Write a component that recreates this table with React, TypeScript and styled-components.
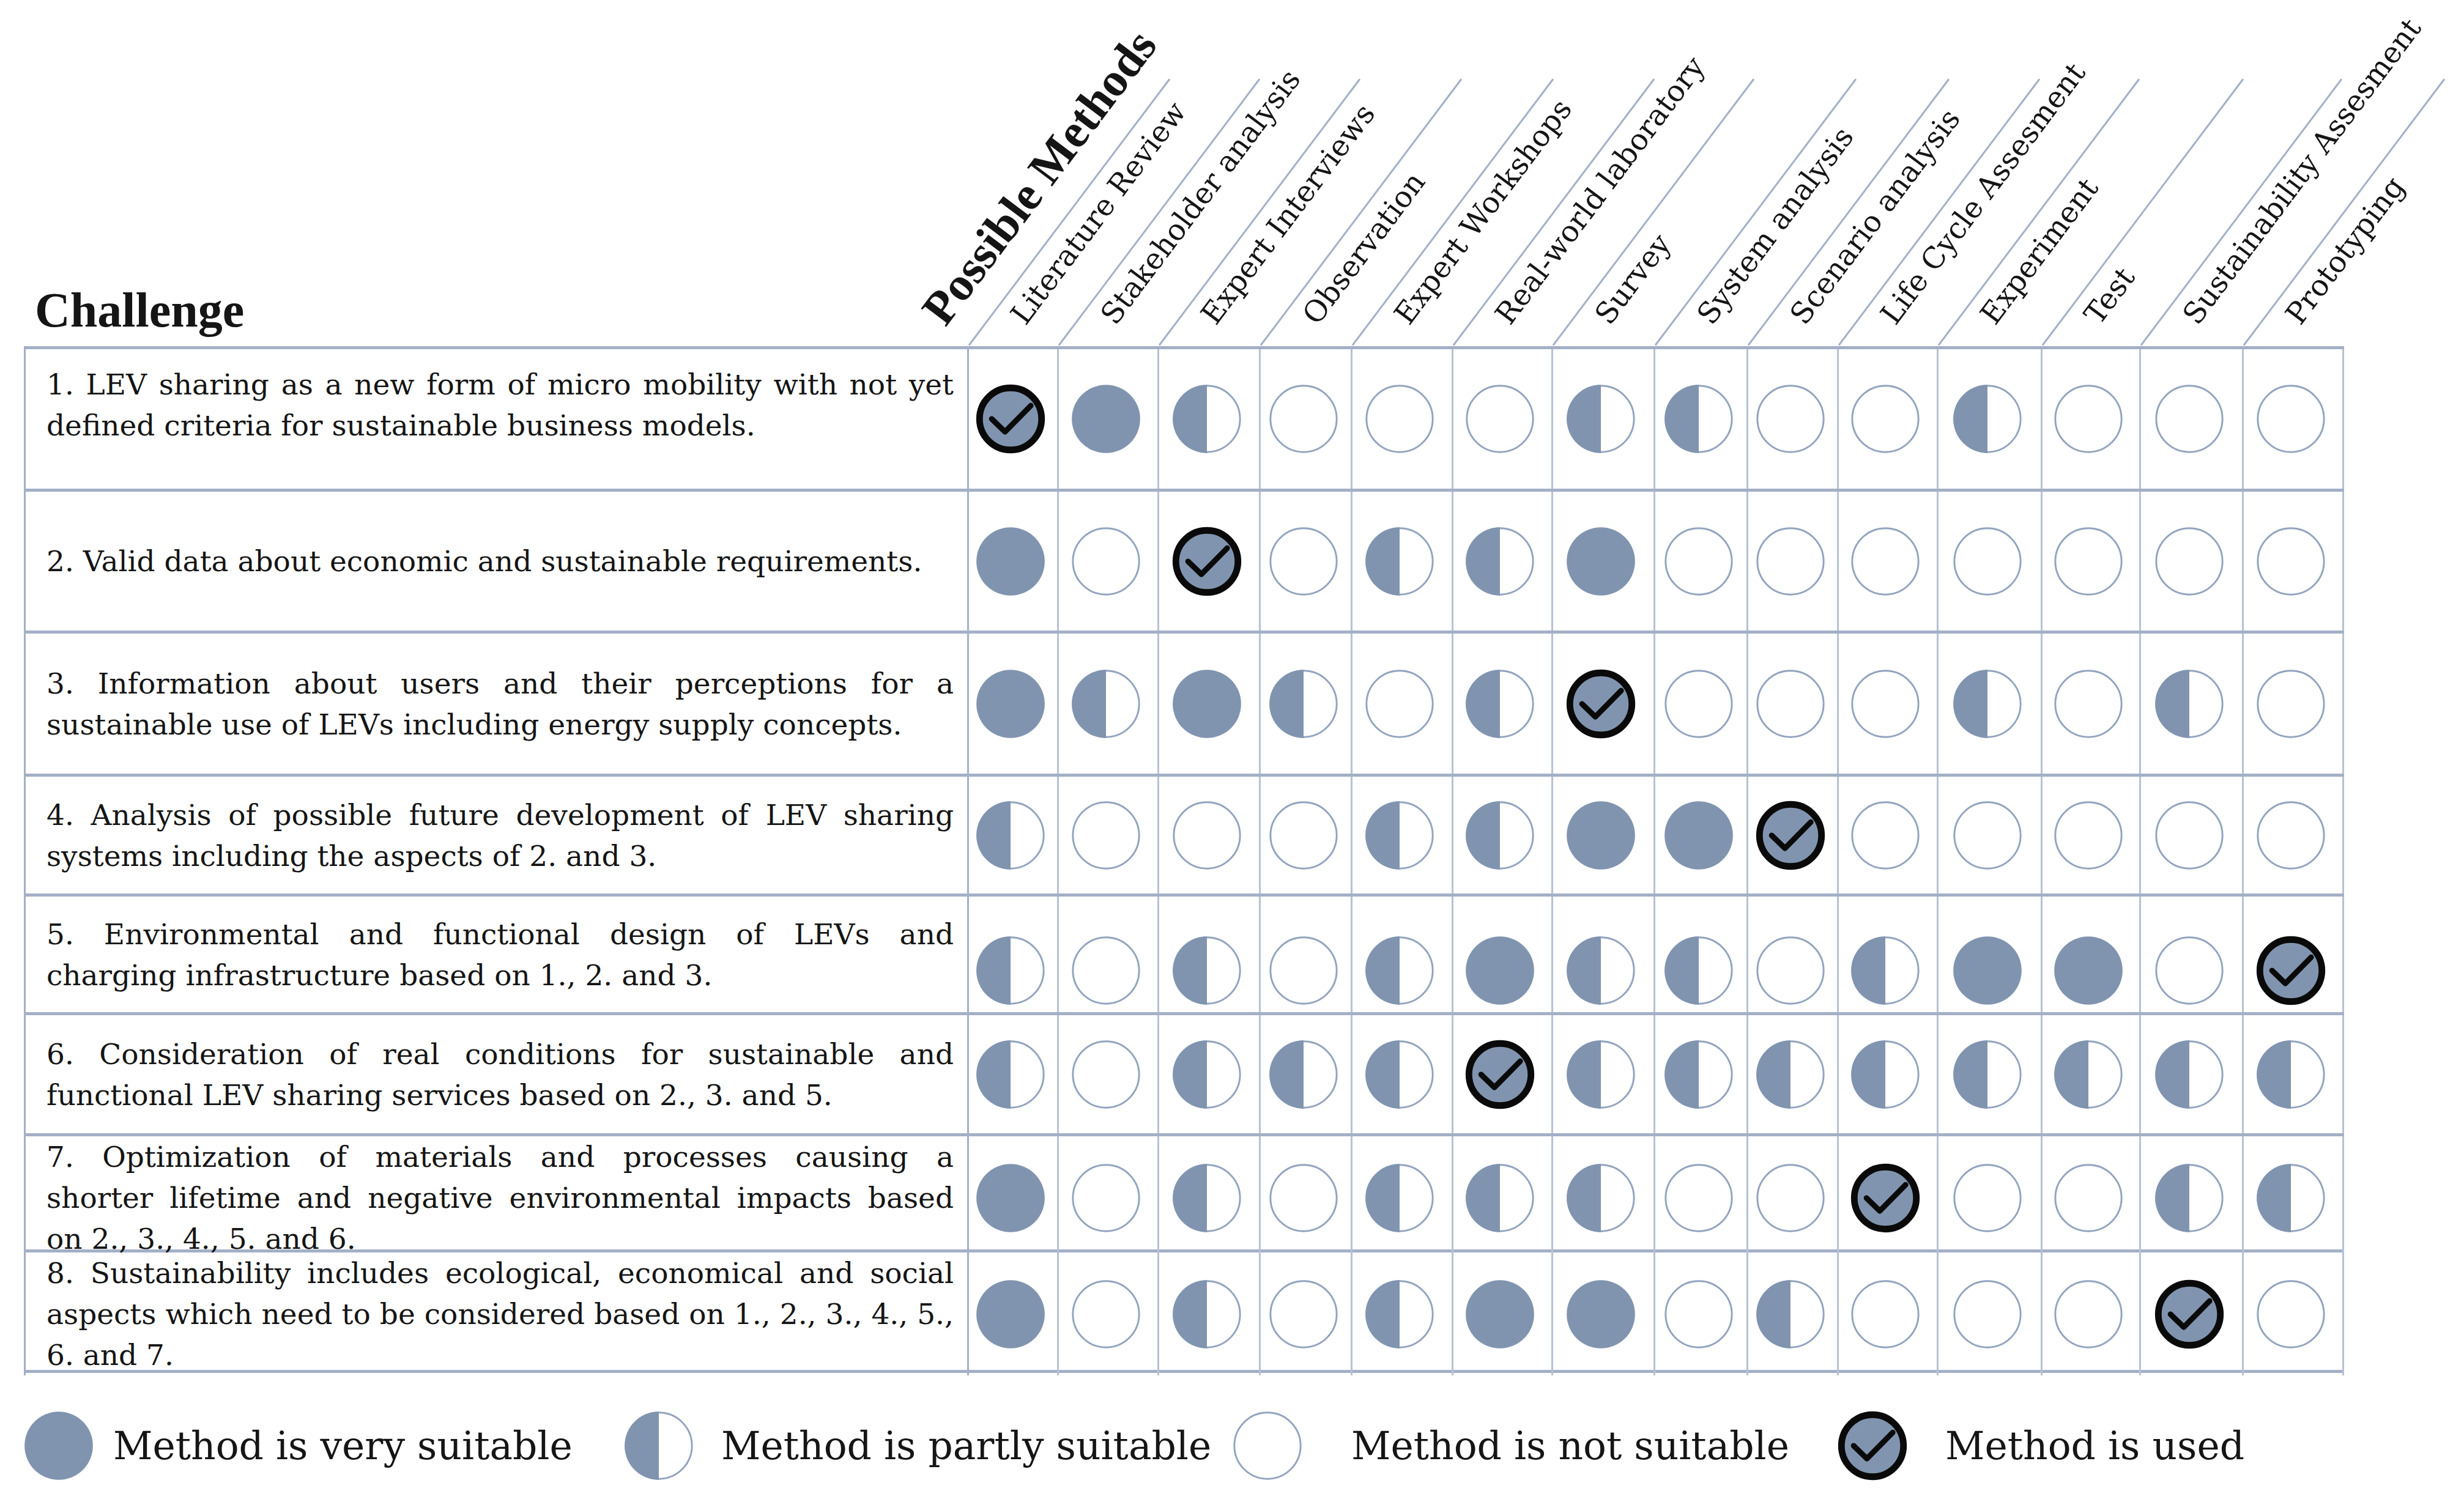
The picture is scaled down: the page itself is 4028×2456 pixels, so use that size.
import React from "react";
import styled, { createGlobalStyle } from "styled-components";

const FILL = "#8194AF";
const OUTLINE = "#93A4BE";
const GRID = "#B7C2D3";
const RULE = "#A3B0C6";
const INK = "#151515";

const GlobalStyle = createGlobalStyle`
  html, body { margin: 0; padding: 0; background: #ffffff; }
  body { width: 4028px; min-height: 2456px; overflow: hidden; }
`;

type Mark = "F" | "H" | "E" | "C";

const LEAD_WIDTH = 1545;
const COL_WIDTHS = [147, 164, 166, 150, 165, 163, 167, 152, 148, 163, 170, 161, 168, 164];
const GRID_TEMPLATE = `${LEAD_WIDTH}px ${COL_WIDTHS.map((w) => `${w}px`).join(" ")}`;

const METHODS = [
  "Literature Review",
  "Stakeholder analysis",
  "Expert Interviews",
  "Observation",
  "Expert Workshops",
  "Real-world laboratory",
  "Survey",
  "System analysis",
  "Scenario analysis",
  "Life Cycle Assesment",
  "Experiment",
  "Test",
  "Sustainability Assesment",
  "Prototyping",
];

type Challenge = {
  lines: string[];
  marks: string;
  height: number;
  textShift?: number;
  markShift?: number;
};

const CHALLENGES: Challenge[] = [
  {
    lines: ["1. LEV sharing as a new form of micro mobility with not yet", "defined criteria for sustainable business models."],
    marks: "CFHEEEHHEEHEEE",
    height: 233,
    textShift: 23,
  },
  {
    lines: ["2. Valid data about economic and sustainable requirements."],
    marks: "FECEHHFEEEEEEE",
    height: 232,
  },
  {
    lines: ["3. Information about users and their perceptions for a", "sustainable use of LEVs including energy supply concepts."],
    marks: "FHFHEHCEEEHEHE",
    height: 234,
  },
  {
    lines: ["4. Analysis of possible future development of LEV sharing", "systems including the aspects of 2. and 3."],
    marks: "HEEEHHFFCEEEEE",
    height: 196,
  },
  {
    lines: ["5. Environmental and functional design of LEVs and", "charging infrastructure based on 1., 2. and 3."],
    marks: "HEHEHFHHEHFFEC",
    height: 194,
    markShift: 26,
  },
  {
    lines: ["6. Consideration of real conditions for sustainable and", "functional LEV sharing services based on 2., 3. and 5."],
    marks: "HEHHHCHHHHHHHH",
    height: 198,
  },
  {
    lines: [
      "7. Optimization of materials and processes causing a",
      "shorter lifetime and negative environmental impacts based",
      "on 2., 3., 4., 5. and 6.",
    ],
    marks: "FEHEHHHEECEEHH",
    height: 190,
  },
  {
    lines: [
      "8. Sustainability includes ecological, economical and social",
      "aspects which need to be considered based on 1., 2., 3., 4., 5.,",
      "6. and 7.",
    ],
    marks: "FEHEHFFEHEEECE",
    height: 197,
  },
];

/* ---------- page ---------- */

const Page = styled.div`
  width: 4028px;
  height: 2456px;
  box-sizing: border-box;
  padding-left: 39px;
  color: ${INK};
  background: #ffffff;
`;

/* ---------- header ---------- */

const HeaderRow = styled.div`
  display: flex;
  height: 566px;
`;

const HeaderLead = styled.div`
  position: relative;
  flex: none;
  width: ${LEAD_WIDTH}px;
  display: flex;
  align-items: flex-end;
`;

const ChallengeTitle = styled.h2`
  margin: 0 0 19px 18px;
  font: bold 80px/1 "Liberation Serif", serif;
  color: ${INK};
`;

const GroupTitle = styled.div`
  position: absolute;
  left: calc(100% - 28px);
  bottom: 22px;
  transform-origin: 0 100%;
  transform: rotate(-53deg);
  font: bold 78px/1 "Liberation Serif", serif;
  white-space: nowrap;
  color: ${INK};
`;

const MethodHead = styled.div<{ $w: number }>`
  position: relative;
  flex: none;
  width: ${(p) => p.$w}px;

  &::before {
    content: "";
    position: absolute;
    left: 0;
    bottom: 0;
    width: 545px;
    height: 3px;
    background: ${RULE};
    transform-origin: 0 50%;
    transform: rotate(-53deg);
  }
`;

const MethodLabel = styled.span`
  position: absolute;
  left: 98px;
  bottom: 28px;
  transform-origin: 0 100%;
  transform: rotate(-53deg);
  font: 48px/1 "DejaVu Serif", serif;
  white-space: nowrap;
  color: ${INK};
`;

/* ---------- table ---------- */

const Table = styled.div`
  border-top: 5px solid ${RULE};
  width: ${LEAD_WIDTH + COL_WIDTHS.reduce((a, b) => a + b, 0)}px;
`;

const Row = styled.div<{ $h: number }>`
  display: grid;
  grid-template-columns: ${GRID_TEMPLATE};
  height: ${(p) => p.$h}px;
  box-sizing: border-box;
  border-bottom: 5px solid ${RULE};
`;

const TextCell = styled.div<{ $shift: number }>`
  box-sizing: border-box;
  display: flex;
  flex-direction: column;
  justify-content: center;
  padding: 0 22px ${(p) => p.$shift * 2}px 34px;
  border-left: 3px solid ${RULE};
  border-right: 3px solid ${RULE};
  min-width: 0;
`;

const TextLine = styled.div<{ $justify: boolean }>`
  font: 47px/67px "DejaVu Serif", serif;
  white-space: nowrap;
  text-align: ${(p) => (p.$justify ? "justify" : "left")};
  text-align-last: ${(p) => (p.$justify ? "justify" : "left")};
  color: ${INK};
`;

const MarkCell = styled.div<{ $shift: number }>`
  box-sizing: border-box;
  display: flex;
  align-items: center;
  justify-content: center;
  padding-top: ${(p) => p.$shift * 2}px;
  padding-right: 8px;
  border-right: 3px solid ${GRID};
`;

/* ---------- legend ---------- */

const Legend = styled.div`
  display: flex;
  align-items: center;
  margin-top: 62px;
`;

const LegendItem = styled.div<{ $w?: number }>`
  display: flex;
  align-items: center;
  flex: none;
  width: ${(p) => (p.$w ? `${p.$w}px` : "auto")};
`;

const LegendText = styled.span<{ $gap: number }>`
  margin-left: ${(p) => p.$gap}px;
  font: 63px/1 "DejaVu Serif", serif;
  white-space: nowrap;
  color: ${INK};
`;

/* ---------- marks ---------- */

const MarkIcon: React.FC<{ kind: Mark; size?: number }> = ({ kind, size = 114 }) => (
  <svg width={size} height={size} viewBox="0 0 100 100" aria-hidden="true">
    {kind === "F" && <circle cx="50" cy="50" r="49" fill={FILL} />}
    {kind === "E" && <circle cx="50" cy="50" r="47.5" fill="#ffffff" stroke={OUTLINE} strokeWidth="2.6" />}
    {kind === "H" && (
      <>
        <circle cx="50" cy="50" r="47.5" fill="#ffffff" stroke={OUTLINE} strokeWidth="2.6" />
        <path d="M50 1 A49 49 0 0 0 50 99 Z" fill={FILL} />
      </>
    )}
    {kind === "C" && (
      <>
        <circle cx="50" cy="50" r="44.5" fill={FILL} stroke="#0a0a0a" strokeWidth="9.5" />
        <path d="M23 50 L42 68.5 L79 31" fill="none" stroke="#0a0a0a" strokeWidth="8" strokeLinecap="round" strokeLinejoin="round" />
      </>
    )}
  </svg>
);

const LEGEND: { kind: Mark; text: string; w?: number; gap: number }[] = [
  { kind: "F", text: "Method is very suitable", w: 981, gap: 32 },
  { kind: "H", text: "Method is partly suitable", w: 995, gap: 45 },
  { kind: "E", text: "Method is not suitable", w: 989, gap: 80 },
  { kind: "C", text: "Method is used", gap: 62 },
];

export default function App() {
  return (
    <Page>
      <GlobalStyle />
      <HeaderRow>
        <HeaderLead>
          <ChallengeTitle>Challenge</ChallengeTitle>
          <GroupTitle>Possible Methods</GroupTitle>
        </HeaderLead>
        {METHODS.map((m, i) => (
          <MethodHead key={m} $w={COL_WIDTHS[i]}>
            <MethodLabel>{m}</MethodLabel>
          </MethodHead>
        ))}
      </HeaderRow>

      <Table>
        {CHALLENGES.map((c, r) => (
          <Row key={r} $h={c.height}>
            <TextCell $shift={c.textShift ?? 0}>
              {c.lines.map((line, li) => (
                <TextLine key={li} $justify={li < c.lines.length - 1}>
                  {line}
                </TextLine>
              ))}
            </TextCell>
            {c.marks.split("").map((k, mi) => (
              <MarkCell key={mi} $shift={c.markShift ?? 0}>
                <MarkIcon kind={k as Mark} />
              </MarkCell>
            ))}
          </Row>
        ))}
      </Table>

      <Legend>
        {LEGEND.map((l) => (
          <LegendItem key={l.text} $w={l.w}>
            <MarkIcon kind={l.kind} />
            <LegendText $gap={l.gap}>{l.text}</LegendText>
          </LegendItem>
        ))}
      </Legend>
    </Page>
  );
}
